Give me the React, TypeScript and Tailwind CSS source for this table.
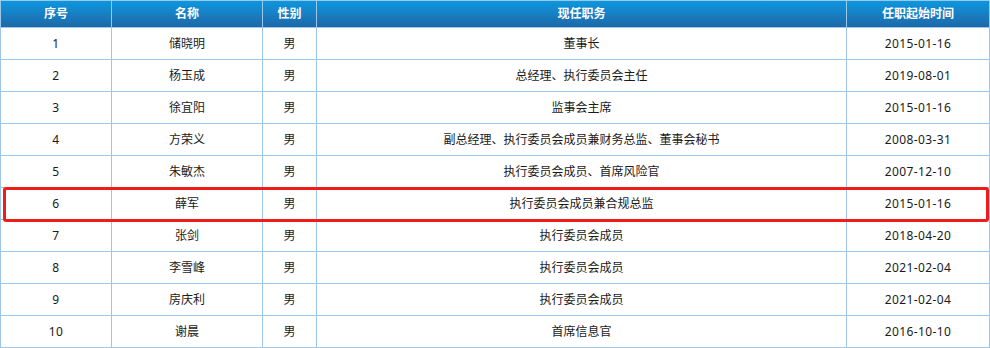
import React from 'react';

const rows = [
  ['1', '储晓明', '男', '董事长', '2015-01-16'],
  ['2', '杨玉成', '男', '总经理、执行委员会主任', '2019-08-01'],
  ['3', '徐宜阳', '男', '监事会主席', '2015-01-16'],
  ['4', '方荣义', '男', '副总经理、执行委员会成员兼财务总监、董事会秘书', '2008-03-31'],
  ['5', '朱敏杰', '男', '执行委员会成员、首席风险官', '2007-12-10'],
  ['6', '薛军', '男', '执行委员会成员兼合规总监', '2015-01-16'],
  ['7', '张剑', '男', '执行委员会成员', '2018-04-20'],
  ['8', '李雪峰', '男', '执行委员会成员', '2021-02-04'],
  ['9', '房庆利', '男', '执行委员会成员', '2021-02-04'],
  ['10', '谢晨', '男', '首席信息官', '2016-10-10'],
];

const headers = ['序号', '名称', '性别', '现任职务', '任职起始时间'];

export default function App() {
  return (
    <div className="relative w-[990px] h-[348px] bg-white font-['Noto_Sans','Noto_Sans_CJK_SC',sans-serif] text-[12px]">
      <div className="grid grid-cols-[111px_151px_54px_530px_143px] border-l border-t border-[#9cc6ea]">
        {headers.map((h) => (
          <div
            key={h}
            className="h-[27px] flex items-center justify-center border-r border-b border-[#9cc6ea] bg-gradient-to-b from-[#0a97df] to-[#1c68a8] text-white font-bold"
          >
            {h}
          </div>
        ))}
        {rows.map((r) =>
          r.map((c, i) => (
            <div
              key={r[0] + '-' + i}
              className={
                'h-[32px] flex items-center justify-center border-r border-b border-[#9cc6ea] text-[#1a1a1a] ' +
                (i === 0 || i === 4 ? 'tracking-[0.4px]' : '')
              }
            >
              {c}
            </div>
          ))
        )}
      </div>
      {/* highlight box */}
      <div className="absolute left-[3px] top-[187px] w-[986px] h-[35px] border-[3px] border-[#ee1d1a] rounded-[3px] pointer-events-none" />
    </div>
  );
}
